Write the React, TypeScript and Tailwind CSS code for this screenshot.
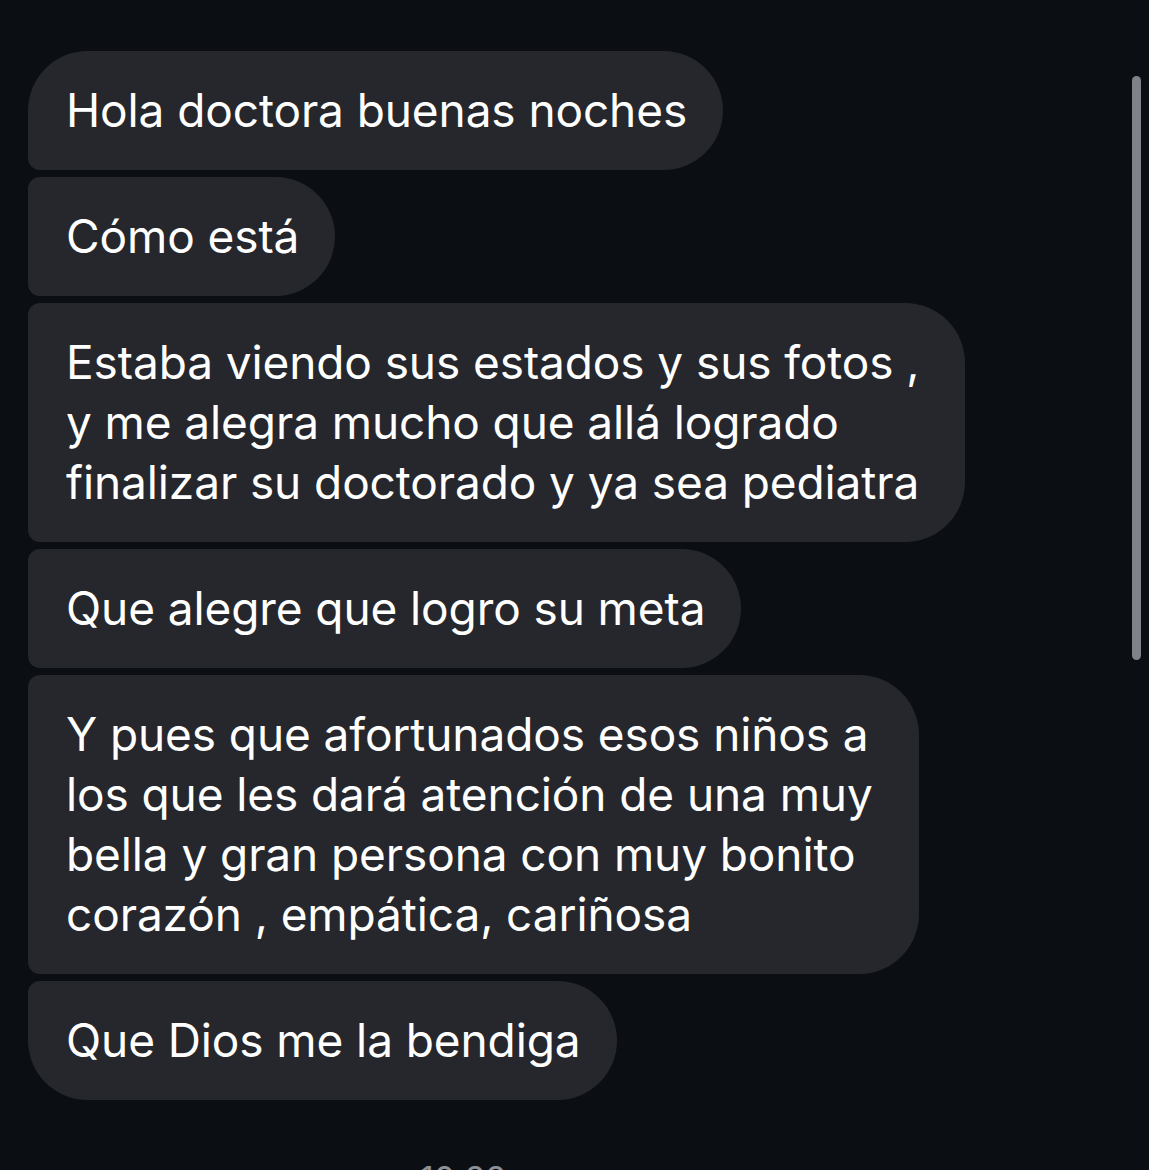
import React from "react";

type Pos = "first" | "mid" | "last";

function Bubble({ lines, pos, wide }: { lines: string[]; pos: Pos; wide?: boolean }) {
  const radius =
    pos === "first"
      ? "rounded-tl-[60px] rounded-bl-[12px] rounded-r-[60px]"
      : pos === "last"
      ? "rounded-tl-[12px] rounded-bl-[60px] rounded-r-[60px]"
      : "rounded-l-[12px] rounded-r-[60px]";
  return (
    <div
      className={`w-fit bg-[#25272c] text-white pl-[38px] ${wide ? "pr-[46px]" : "pr-[36px]"} pt-[29px] pb-[30px] ${radius}`}
    >
      {lines.map((l, i) => (
        <div key={i} className="whitespace-nowrap">
          {l}
        </div>
      ))}
    </div>
  );
}

export default function App() {
  return (
    <div
      className="relative w-[1149px] h-[1170px] overflow-hidden bg-[#0b0f13]"
      style={{ fontFamily: "Inter, 'Noto Sans', sans-serif" }}
    >
      <div className="flex flex-col gap-[7px] pl-[28px] pt-[51px] text-[46px] leading-[60px] tracking-[-0.1px]">
        <Bubble pos="first" lines={["Hola doctora buenas noches"]} />
        <Bubble pos="mid" lines={["Cómo está"]} />
        <Bubble
          pos="mid"
          wide
          lines={[
            "Estaba viendo sus estados y sus fotos ,",
            "y me alegra mucho que allá logrado",
            "finalizar su doctorado y ya sea pediatra",
          ]}
        />
        <Bubble pos="mid" lines={["Que alegre que logro su meta"]} />
        <Bubble
          pos="mid"
          wide
          lines={[
            "Y pues que afortunados esos niños a",
            "los que les dará atención de una muy",
            "bella y gran persona con muy bonito",
            "corazón , empática, cariñosa",
          ]}
        />
        <Bubble pos="last" lines={["Que Dios me la bendiga"]} />
        <div className="mt-[52px] pl-[392px] text-[34px] leading-[40px] text-[#8e9197]">10:22 p. m.</div>
      </div>
      <div className="absolute left-[1132px] top-[76px] w-[9px] h-[584px] rounded-full bg-[#7f8387]" />
    </div>
  );
}
